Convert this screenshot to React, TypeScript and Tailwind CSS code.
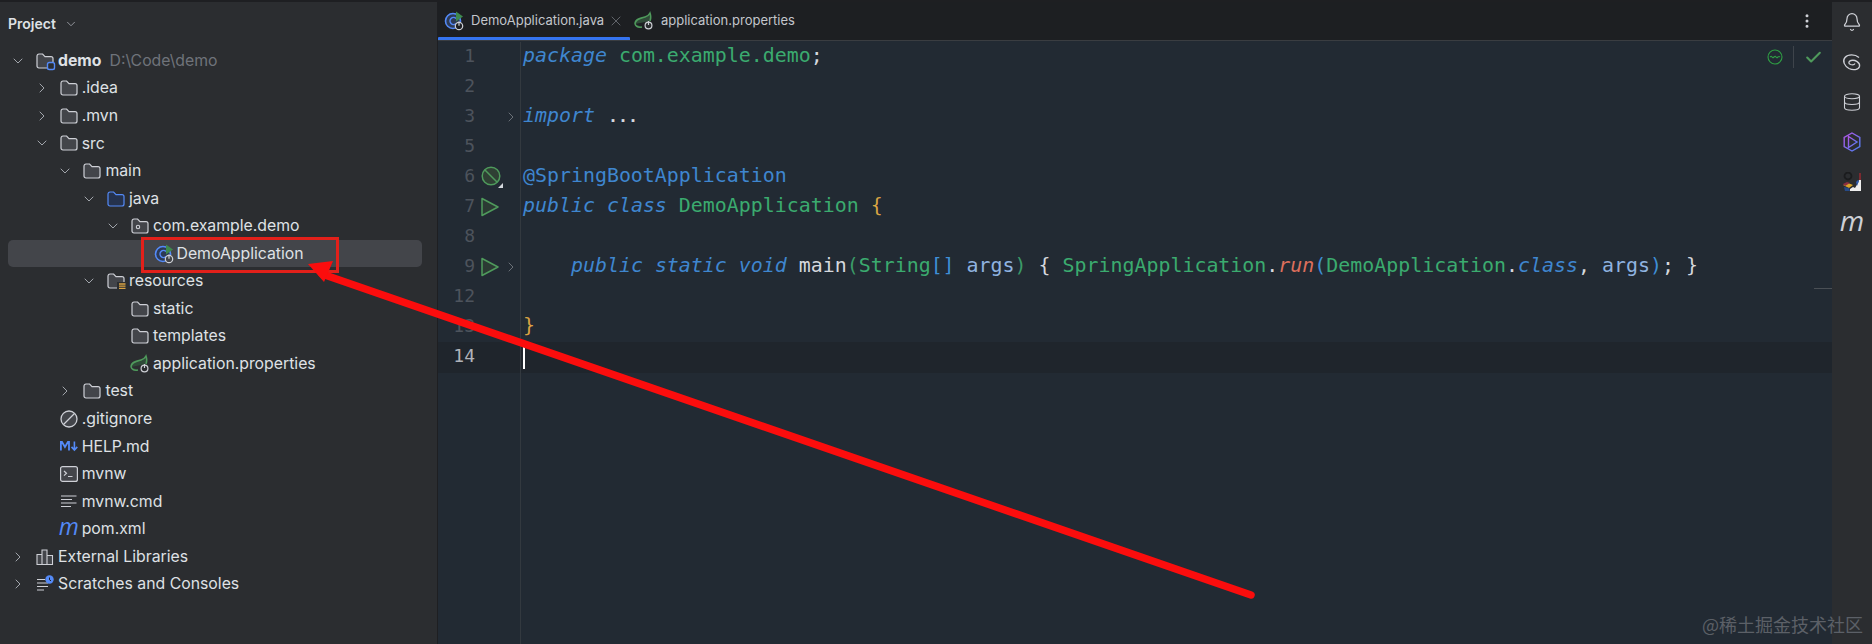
import React from 'react'
import { ChevronDown, ChevronRight, X, Check, MoreVertical, Bell, Database } from 'lucide-react'

const indent = ['pl-[6px]', 'pl-[29.7px]', 'pl-[53.4px]', 'pl-[77px]', 'pl-[101px]', 'pl-[124.5px]']

function Folder({ tone = 'gray', badge }: { tone?: 'gray' | 'blue'; badge?: 'module' | 'package' | 'res' }) {
  const stroke = tone === 'blue' ? '#548af7' : '#ced0d6'
  const fill = tone === 'blue' ? '#25324d' : '#43454a'
  return (
    <svg viewBox="0 0 18 16" className="w-[18px] h-[16px] overflow-visible" fill="none">
      <path d="M1 3.2C1 2 1.8 1 3 1h3.6l2.4 2.6h6c1.200 0 2 .8 2 2v7.400c0 1.100-.8 2-2 2H3c-1.200 0-2-.9-2-2z" fill={fill} stroke={stroke} strokeWidth="1.2" />
      {badge === 'module' && <rect x="11.500" y="9.500" width="7" height="7" rx="1.800" fill="#2b2d30" stroke="#548af7" strokeWidth="1.400" />}
      {badge === 'package' && <circle cx="7" cy="9" r="1.700" stroke="#ced0d6" strokeWidth="1.100" />}
      {badge === 'res' && (
        <g>
          <rect x="10" y="9" width="9" height="8" fill="#2b2d30" />
          <path d="M12 11h6.500M12 13.200h6.500M12 15.400h6.500" stroke="#d9a343" strokeWidth="1.300" />
        </g>
      )}
    </svg>
  )
}

function PowerBadge({ x, y }: { x: number; y: number }) {
  return (
    <g fill="none" stroke="#ced0d6" strokeWidth="1.200">
      <circle cx={x} cy={y} r="3.400" fill="#2b2d30" />
      <path d={`M${x} ${y - 4.500}v4`} />
    </g>
  )
}

function SpringClass({ bg = '#43454a' }: { bg?: string }) {
  return (
    <svg viewBox="0 0 20 20" className="w-[20px] h-[20px] overflow-visible" fill="none">
      <circle cx="9" cy="10" r="7.500" fill="#2d3a55" stroke="#548af7" strokeWidth="1.600" />
      <path d="M12 7.500a3.500 3.500 0 1 0 0 5" stroke="#548af7" strokeWidth="1.500" />
      <path d="M12 0.500l7 5-7 5z" fill="#3f8a4e" />
      <g fill="none" stroke="#ced0d6" strokeWidth="1.200">
        <circle cx="15" cy="15" r="3.700" fill={bg} />
        <path d="M15 10.500v4.200" />
      </g>
    </svg>
  )
}

function SpringLeaf() {
  return (
    <svg viewBox="0 0 20 20" className="w-[20px] h-[20px] overflow-visible" fill="none">
      <path d="M1 13c0-5 6-6 10-7 2-.5 4-2 5-4 1 3 1 6 0 8M1 13c1 3 4 3.500 7 3" stroke="#4f9a5c" strokeWidth="1.500" fill="#2f4a38" />
      <PowerBadge x={14.500} y={14.500} />
    </svg>
  )
}

function GitIgnore() {
  return (
    <svg viewBox="0 0 18 18" className="w-[18px] h-[18px]" fill="none">
      <circle cx="9" cy="9" r="8" fill="#43454a" stroke="#ced0d6" strokeWidth="1.300" />
      <path d="M3.500 14.500l11-11" stroke="#ced0d6" strokeWidth="1.300" />
    </svg>
  )
}

function MdIcon() {
  return (
    <svg viewBox="0 0 20 12" className="w-[20px] h-[12px]" fill="none">
      <path d="M1 11V1.500h1.200L5.500 7l3.300-5.500H10V11" stroke="#548af7" strokeWidth="2" />
      <path d="M16 1v9M12.800 7l3.200 3.500L19.200 7" stroke="#548af7" strokeWidth="1.800" />
    </svg>
  )
}

function Terminal() {
  return (
    <svg viewBox="0 0 18 16" className="w-[18px] h-[16px]" fill="none">
      <rect x=".6" y=".6" width="16.800" height="14.800" rx="2" fill="#43454a" stroke="#ced0d6" strokeWidth="1.200" />
      <path d="M4 5l2.500 2.300L4 9.600M8 10.500h4.500" stroke="#ced0d6" strokeWidth="1.200" />
    </svg>
  )
}

function TextFile() {
  return (
    <svg viewBox="0 0 18 14" className="w-[18px] h-[14px]" fill="none" stroke="#ced0d6" strokeWidth="1.100">
      <path d="M1 1h15.500M1 4.500h11M1 8h15.500M1 11.500h10" />
    </svg>
  )
}

function Libraries() {
  return (
    <svg viewBox="0 0 18 16" className="w-[18px] h-[16px]" fill="none" stroke="#ced0d6" strokeWidth="1.100">
      <path d="M1 5.500h5v10H1zM6 1h5v14.500H6zM11 6.500h5.500v9H11z" fill="#43454a" />
    </svg>
  )
}

function Scratches() {
  return (
    <svg viewBox="0 0 18 18" className="w-[18px] h-[18px] overflow-visible" fill="none">
      <path d="M1 4.500h8M1 8h11M1 11.500h11M1 15h7" stroke="#ced0d6" strokeWidth="1.100" />
      <circle cx="13.500" cy="4.500" r="4.200" fill="#548af7" />
      <path d="M13.500 2.500v2.300l1.500 1" stroke="#1e1f22" strokeWidth="1" />
    </svg>
  )
}

function MavenM({ className }: { className: string }) {
  return <span className={`font-['Open_Sans',sans-serif] italic leading-none ${className}`}>m</span>
}

type Row = { depth: number; open?: boolean; icon: React.ReactNode; name: string; hint?: string; bold?: boolean; selected?: boolean }

const rows: Row[] = [
  { depth: 0, open: true, icon: <Folder badge="module" />, name: 'demo', hint: 'D:\\Code\\demo', bold: true },
  { depth: 1, open: false, icon: <Folder />, name: '.idea' },
  { depth: 1, open: false, icon: <Folder />, name: '.mvn' },
  { depth: 1, open: true, icon: <Folder />, name: 'src' },
  { depth: 2, open: true, icon: <Folder />, name: 'main' },
  { depth: 3, open: true, icon: <Folder tone="blue" />, name: 'java' },
  { depth: 4, open: true, icon: <Folder badge="package" />, name: 'com.example.demo' },
  { depth: 5, icon: <SpringClass />, name: 'DemoApplication', selected: true },
  { depth: 3, open: true, icon: <Folder badge="res" />, name: 'resources' },
  { depth: 4, icon: <Folder />, name: 'static' },
  { depth: 4, icon: <Folder />, name: 'templates' },
  { depth: 4, icon: <SpringLeaf />, name: 'application.properties' },
  { depth: 2, open: false, icon: <Folder />, name: 'test' },
  { depth: 1, icon: <GitIgnore />, name: '.gitignore' },
  { depth: 1, icon: <MdIcon />, name: 'HELP.md' },
  { depth: 1, icon: <Terminal />, name: 'mvnw' },
  { depth: 1, icon: <TextFile />, name: 'mvnw.cmd' },
  { depth: 1, icon: <MavenM className="text-[23px] text-[#548af7] -mt-[6px]" />, name: 'pom.xml' },
  { depth: 0, open: false, icon: <Libraries />, name: 'External Libraries' },
  { depth: 0, open: false, icon: <Scratches />, name: 'Scratches and Consoles' },
]

function TreeRow({ row }: { row: Row }) {
  return (
    <div className={`relative h-[27.55px] flex items-center ${indent[row.depth]}`}>
      {row.selected && <div className="absolute left-[8px] right-[15px] top-0 bottom-0 rounded-[5px] bg-[#43454a]" />}
      <div className="relative w-[24px] flex justify-center shrink-0 text-[#b4b8bf]">
        {row.open === true && <ChevronDown size={16} strokeWidth={1.3} />}
        {row.open === false && <ChevronRight size={16} strokeWidth={1.3} />}
      </div>
      <div className="relative w-[18px] ml-[6px] mr-[4px] shrink-0 flex items-center justify-center">{row.icon}</div>
      <span className={`relative whitespace-nowrap text-[#dfe1e5] ${row.bold ? 'font-bold' : ''}`}>{row.name}</span>
      {row.hint && <span className="relative ml-[8px] text-[#6f737a] whitespace-nowrap">{row.hint}</span>}
    </div>
  )
}

const kw = 'text-[#3f86cf] italic'
const gr = 'text-[#3bab6f]'
const wh = 'text-[#d5d8de]'

const K = ({ children }: { children: string }) => <span className={kw}>{children}</span>
const G = ({ children }: { children: string }) => <span className={gr}>{children}</span>
const W = ({ children }: { children: string }) => <span className={wh}>{children}</span>

type Line = { n: number; code?: React.ReactNode; gutter?: 'bean' | 'run'; fold?: boolean; current?: boolean }

const lines: Line[] = [
  { n: 1, code: <><K>package</K> <G>com.example.demo</G><W>;</W></> },
  { n: 2 },
  { n: 3, fold: true, code: <><K>import</K><span className="ml-[13px] text-[16.6px] font-bold text-[#d5d8de]">...</span></> },
  { n: 5 },
  { n: 6, gutter: 'bean', code: <span className="text-[#3f86cf]">@SpringBootApplication</span> },
  { n: 7, gutter: 'run', code: <><K>public</K> <K>class</K> <G>DemoApplication</G> <span className="text-[#d9a343]">{'{'}</span></> },
  { n: 8 },
  {
    n: 9,
    gutter: 'run',
    fold: true,
    code: (
      <>
        {'    '}<K>public</K> <K>static</K> <K>void</K> <W>main</W>
        <span className="text-[#3b9a68]">(</span><G>String</G><span className="text-[#3f8fd6]">[]</span> <span className="text-[#8fb3e0]">args</span>
        <span className="text-[#3b9a68]">)</span> <W>{'{'}</W> <G>SpringApplication</G><W>.</W>
        <span className="text-[#dd6f5c] italic">run</span><span className="text-[#3f8fd6]">(</span><G>DemoApplication</G><W>.</W>
        <K>class</K><W>, </W><span className="text-[#8fb3e0]">args</span><span className="text-[#3f8fd6]">)</span><W>;</W> <W>{'}'}</W>
      </>
    ),
  },
  { n: 12 },
  { n: 13, code: <span className="text-[#d9a343]">{'}'}</span> },
  { n: 14, current: true, code: <span className="inline-block w-[2px] h-[25px] bg-white align-middle" /> },
]

function GutterIcon({ kind }: { kind: 'bean' | 'run' }) {
  if (kind === 'run') {
    return (
      <svg viewBox="0 0 18 20" className="w-[18px] h-[20px]" fill="none">
        <path d="M1 1.500l16 8.500-16 8.500z" fill="#2b3a33" stroke="#4f9a5c" strokeWidth="1.500" strokeLinejoin="round" />
      </svg>
    )
  }
  return (
    <svg viewBox="0 0 22 22" className="w-[22px] h-[22px] overflow-visible" fill="none">
      <circle cx="10" cy="10" r="8.800" fill="#2f4034" stroke="#4f9a5c" strokeWidth="1.500" />
      <path d="M4 4l12 12" stroke="#4f9a5c" strokeWidth="1.500" />
      <path d="M22 17v5h-5z" fill="#d5d8de" />
    </svg>
  )
}

function CodeLine({ line }: { line: Line }) {
  return (
    <div className={`flex h-[30.05px] items-center ${line.current ? 'bg-[#1f252c]' : ''}`}>
      <div className={`w-[37px] -mt-[4px] text-right shrink-0 text-[18px] font-['DejaVu_Sans_Mono',monospace] ${line.current ? 'text-[#b0b3ba]' : 'text-[#4d535c]'}`}>{line.n}</div>
      <div className="w-[28px] pl-[6px] shrink-0 flex items-center">{line.gutter && <GutterIcon kind={line.gutter} />}</div>
      <div className="w-[17px] shrink-0 flex items-center text-[#70757d]">{line.fold && <ChevronRight size={16} strokeWidth={1.4} />}</div>
      <div className="self-stretch w-px bg-[#33393f] shrink-0" />
      <pre className="pl-[2px] -mt-[2px] whitespace-pre font-['DejaVu_Sans_Mono',monospace] text-[19.92px] leading-[30px]">{line.code}</pre>
    </div>
  )
}

function Tab({ icon, name, active }: { icon: React.ReactNode; name: string; active?: boolean }) {
  return (
    <div className={`relative h-full flex items-center ${active ? 'w-[192px] pl-[6px]' : 'pl-[4px]'}`}>
      <div className="w-[20px] flex items-center justify-center">{icon}</div>
      <span className="ml-[7px] text-[13px] text-[#c3c6cc] whitespace-nowrap">{name}</span>
      {active && <X size={16} strokeWidth={1.1} className="ml-[4px] text-[#7a7e85]" />}
      {active && <div className="absolute left-0 right-0 bottom-0 h-[3px] rounded-t-[1px] bg-[#3574f0]" />}
    </div>
  )
}

function Spiral() {
  return (
    <svg viewBox="0 0 20 20" className="w-[20px] h-[20px]" fill="none" stroke="#ced0d6" strokeWidth="1.300">
      <path d="M17 5.500C13 2 6 2 3 5.500C0 9 2.500 14 7 16.500C11 18.500 16.500 18 17.500 14.500C18.500 10.500 13 7.500 9 8.500C6.500 9.200 6 11.500 8.500 12.500C10.500 13.200 12.500 12.500 13 11.500" />
    </svg>
  )
}

function Hexagon() {
  return (
    <svg viewBox="0 0 20 20" className="w-[20px] h-[20px]" fill="none" strokeWidth="1.400">
      <defs>
        <linearGradient id="hex" x1="0" y1="0" x2="1" y2="1">
          <stop offset="0" stopColor="#b455e8" />
          <stop offset="1" stopColor="#4a80f0" />
        </linearGradient>
      </defs>
      <path d="M10 1l7.800 4.500v9L10 19l-7.800-4.500v-9z" stroke="url(#hex)" />
      <path d="M6.500 4.500l8.500 5.500-8.500 5.500z" stroke="url(#hex)" />
    </svg>
  )
}

function Poster() {
  return (
    <svg viewBox="0 0 20 20" className="w-[20px] h-[20px]">
      <circle cx="6" cy="4" r="3.500" fill="none" stroke="#1b1c1e" strokeWidth="1.800" />
      <path d="M17 1h2v7h-2z" fill="#7a2a30" />
      <path d="M1 13l5-2 5 2-4 3z" fill="#d8a42a" />
      <path d="M1 12l4-2 3 1-5 3z" fill="#8d2f3f" />
      <path d="M2 15l5 1 1 3H3z" fill="#274a86" />
      <path d="M8 17l3-2 2 1 3-5 1-3h2v11H8z" fill="#eeeeee" />
      <path d="M14 10l2-2 1 1-2 5z" fill="#2f5cae" />
    </svg>
  )
}

export default function App() {
  return (
    <div className="w-[1872px] h-[644px] overflow-hidden relative flex font-['Inter',sans-serif] text-[15.8px] bg-[#222a33]">
      <aside className="w-[438px] shrink-0 bg-[#2b2d30] border-r border-[#1e1f22] border-t-2 border-t-[#1e1f22]">
        <div className="h-[43px] flex items-center pl-[8px] text-[#dfe1e5]">
          <span className="font-semibold text-[14px]">Project</span>
          <ChevronDown size={14} strokeWidth={1.4} className="ml-[8px] text-[#a8abb2]" />
        </div>
        <div className="pt-[2px]">
          {rows.map((row) => <TreeRow key={row.name} row={row} />)}
        </div>
      </aside>

      <main className="flex-1 min-w-0 flex flex-col border-t-2 border-[#1e1f22]">
        <div className="h-[39px] shrink-0 flex items-center bg-[#1d1f22] border-b border-[#3a3d41]">
          <Tab active icon={<SpringClass bg="#1d1f22" />} name="DemoApplication.java" />
          <Tab icon={<SpringLeaf />} name="application.properties" />
          <MoreVertical size={18} strokeWidth={2} className="ml-auto mr-[16px] text-[#ced0d6]" />
        </div>
        <div className="relative flex-1 pt-[1px] flex">
          <div className="flex-1 flex flex-col">
            {lines.map((line) => <CodeLine key={line.n} line={line} />)}
            <div className="flex-1 flex">
              <div className="w-[82px] shrink-0" />
              <div className="w-px bg-[#33393f]" />
            </div>
          </div>
          <div className="absolute top-[5px] right-[9px] flex items-center">
            <svg viewBox="0 0 16 16" className="w-[16px] h-[16px]" fill="none" stroke="#2f9e44" strokeWidth="1.100">
              <circle cx="8" cy="8" r="7" />
              <path d="M3 8c1-1 1.500-1 2 0s1 1 2 0 1.500-1 2 0 1 1 2 0 1-1 2 0" />
            </svg>
            <div className="w-px h-[22px] bg-[#3e444b] mx-[10px]" />
            <Check size={19} strokeWidth={2.6} className="text-[#4f9a5c]" />
          </div>
          <div className="absolute top-[247px] right-0 w-[18px] h-px bg-[#4a4f55]" />
        </div>
      </main>

      <nav className="w-[40px] shrink-0 bg-[#2b2d30] border-t-2 border-[#1e1f22] flex flex-col items-center pt-[10px] gap-[20px] text-[#ced0d6]">
        <Bell size={20} strokeWidth={1.500} />
        <Spiral />
        <Database size={20} strokeWidth={1.300} />
        <Hexagon />
        <Poster />
        <MavenM className="text-[28px] h-[20px] -mt-[6px] text-[#ced0d6]" />
      </nav>

      <div className="absolute left-[141px] top-[237px] w-[198px] h-[36px] border-[3px] border-[#e2201a]" />
      <svg className="absolute inset-0 w-full h-full pointer-events-none" viewBox="0 0 1872 644" fill="none">
        <path d="M1251 595L322 274" stroke="#fb0d0d" strokeWidth="7.500" strokeLinecap="round" />
        <path d="M308 264L333 261L324 282z" fill="#fb0d0d" />
      </svg>
      <span className="absolute right-[9px] bottom-[11px] text-[18px] leading-none text-[#5c6067] font-['Noto_Sans_CJK_SC',sans-serif]">@稀土掘金技术社区</span>
    </div>
  )
}
